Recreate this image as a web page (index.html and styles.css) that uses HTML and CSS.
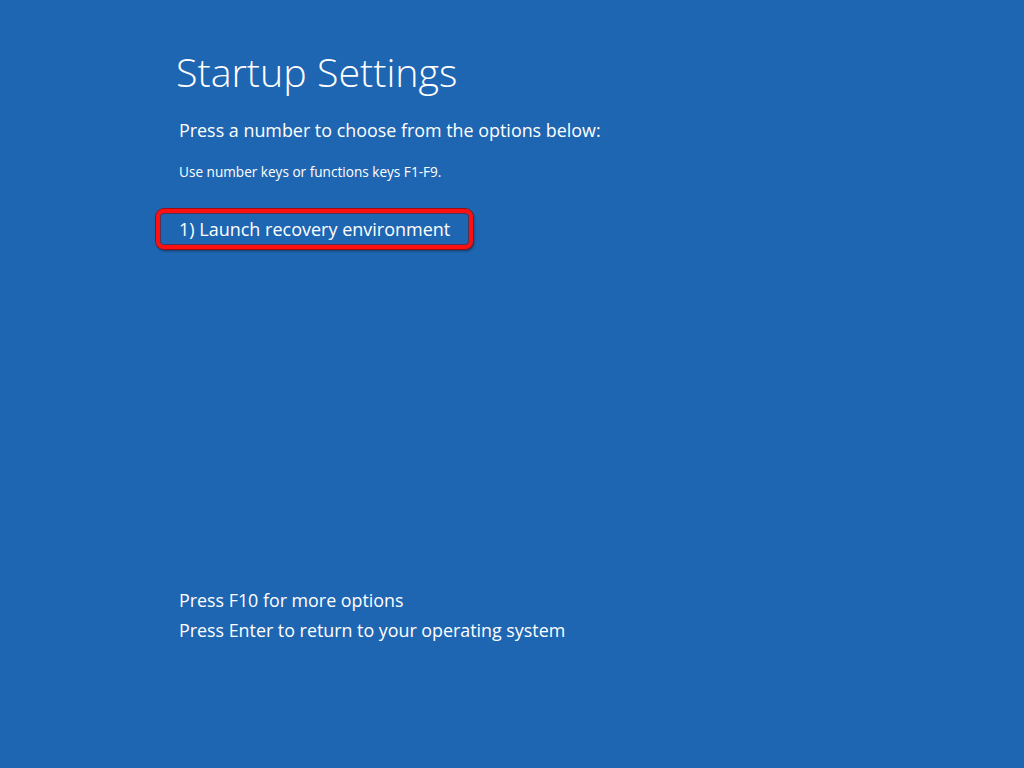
FILE: index.html
```html
<!DOCTYPE html>
<html>
<head>
<meta charset="utf-8">
<link rel="stylesheet" href="styles.css">
</head>
<body>
<main class="screen">
  <h1 class="title">Startup Settings</h1>
  <p class="lead">Press a number to choose from the options below:</p>
  <p class="hint">Use number keys or functions keys F1-F9.</p>
  <div class="options">
    <div class="option highlighted">1) Launch recovery environment</div>
  </div>
  <div class="footer">
    <p class="line">Press F10 for more options</p>
    <p class="line">Press Enter to return to your operating system</p>
  </div>
</main>
</body>
</html>
```
FILE: styles.css
```css
html, body {
  margin: 0;
  padding: 0;
  width: 1024px;
  height: 768px;
  background: #1f66b2;
  overflow: hidden;
}
.screen {
  box-sizing: border-box;
  height: 768px;
  padding: 48px 0 0 179px;
  display: flex;
  flex-direction: column;
  color: #ffffff;
  font-family: "Open Sans", "Noto Sans", sans-serif;
}
.title {
  margin: 0 0 0 -3px;
  font-size: 39.4px;
  font-weight: 300;
  line-height: 48px;
}
.lead {
  margin: 21px 0 0 0;
  font-size: 17.9px;
  line-height: 26px;
}
.hint {
  margin: 20px 0 0 0;
  font-size: 13.6px;
  line-height: 18px;
}
.options {
  margin-top: 28px;
  display: flex;
}
.option {
  font-size: 18px;
  line-height: 26px;
}
.highlighted {
  margin-left: -23px;
  padding: 3px 19px 3px 19px;
  border: 4px solid #ff1010;
  border-radius: 8px;
  box-shadow: 0 0 0 1px #9a0d10, 1px 2px 3px rgba(0,0,0,0.45), inset 0 0 0 1px rgba(120,0,0,0.5);
}
.footer {
  margin-top: 336px;
}
.line {
  margin: 0;
  font-size: 17.85px;
  line-height: 30px;
}
```
